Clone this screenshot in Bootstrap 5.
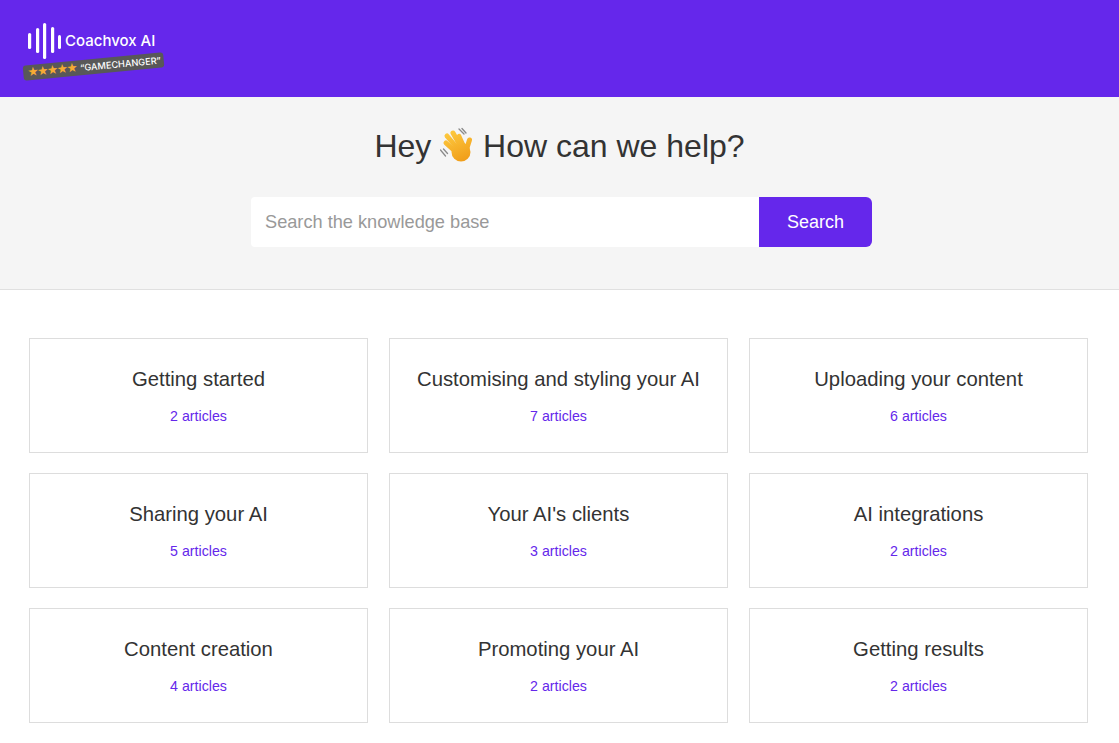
<!DOCTYPE html>
<html lang="en">
<head>
  <meta charset="UTF-8" />
  <meta name="viewport" content="width=device-width, initial-scale=1" />
  <title>Coachvox AI Help</title>
  <link href="https://cdn.jsdelivr.net/npm/bootstrap@5.3.2/dist/css/bootstrap.min.css" rel="stylesheet" />
  <script src="https://cdn.jsdelivr.net/npm/bootstrap@5.3.2/dist/js/bootstrap.bundle.min.js"></script>
  <style>
    body {
      font-family: "Liberation Sans", Arial, sans-serif;
      color: #333;
      background: #fff;
    }
    .top-bar {
      height: 97px;
      background: #6527eb;
      padding: 22px 0 0 27px;
    }
    .logo-wrap {
      width: 140px;
    }
    .logo-name {
      color: #fff;
      font-family: "Inter", sans-serif;
      font-size: 15px;
      font-weight: 500;
      line-height: 38px;
      margin-left: 4px;
      white-space: nowrap;
    }
    .logo-tag {
      position: absolute;
      left: -4px;
      top: 37px;
      width: 141px;
      height: 15px;
      background: #585858;
      border-radius: 3px;
      transform: rotate(-5.5deg);
      color: #fff;
      font-family: "Inter", sans-serif;
      font-size: 9.2px;
      font-weight: 500;
      line-height: 15px;
      padding-left: 4px;
      white-space: nowrap;
    }
    .logo-stars {
      color: #f6ab33;
      font-size: 11px;
      letter-spacing: -1.7px;
      margin-right: 4px;
    }
    .hero {
      height: 193px;
      background: #f5f5f5;
      border-bottom: 1px solid #e0e0e0;
      padding-top: 29px;
    }
    .hero-title {
      font-size: 32px;
      line-height: 40px;
      font-weight: 400;
      margin: 0 0 31px;
      color: #333;
    }
    .hero-title svg {
      vertical-align: -6px;
    }
    .search-box {
      width: 621px;
      margin-left: 251px;
    }
    .search-box .form-control {
      height: 50px;
      border: 0;
      border-radius: 4px 0 0 4px;
      font-size: 18.2px;
      padding: 0 14px;
      box-shadow: none;
    }
    .search-box .form-control::placeholder {
      color: #999;
    }
    .search-box .btn {
      width: 113px;
      height: 50px;
      border: 0;
      border-radius: 0 6px 6px 0;
      background: #6527eb;
      color: #fff;
      font-size: 18px;
    }
    .cat-area {
      padding: 48px 31px 0 29px;
    }
    .cat-area .row {
      --bs-gutter-x: 21px;
      --bs-gutter-y: 20px;
    }
    .cat-box {
      height: 115px;
      border: 1px solid #ddd;
      text-align: center;
      padding-top: 27px;
      text-decoration: none;
    }
    .cat-name {
      font-size: 20.3px;
      line-height: 26px;
      color: #333;
    }
    .cat-count {
      font-size: 14.2px;
      line-height: 20px;
      margin-top: 14px;
      color: #6527eb;
    }
  </style>
</head>
<body>
  <header class="top-bar">
    <div class="logo-wrap position-relative d-flex align-items-start">
      <svg width="34" height="38" viewBox="0 0 34 38" fill="#fff" aria-hidden="true">
        <rect x="1" y="11" width="3.2" height="16" rx="1.6" />
        <rect x="9" y="6" width="3.2" height="25" rx="1.6" />
        <rect x="16" y="1" width="3.2" height="36" rx="1.6" />
        <rect x="24" y="5" width="3.2" height="26" rx="1.6" />
        <rect x="31" y="13" width="3" height="14" rx="1.5" />
      </svg>
      <span class="logo-name">Coachvox AI</span>
      <div class="logo-tag"><span class="logo-stars">★★★★★</span>“GAMECHANGER”</div>
    </div>
  </header>

  <section class="hero text-center">
    <h1 class="hero-title">Hey
      <svg width="34" height="36" viewBox="4 3 34 36" aria-hidden="true">
        <defs>
          <linearGradient id="handFill" gradientUnits="userSpaceOnUse" x1="14" y1="8" x2="28" y2="38">
            <stop offset="0" stop-color="#fdc83e" />
            <stop offset="1" stop-color="#f09c18" />
          </linearGradient>
        </defs>
        <g fill="none" stroke="url(#handFill)" stroke-linecap="round">
          <path stroke-width="5" d="M20 28 10 19" />
          <path stroke-width="5" d="M22 25 11 12" />
          <path stroke-width="5" d="M25 23 17 9" />
          <path stroke-width="4.500" d="M28 23 23 12" />
          <path stroke-width="5" d="M29 30 33.500 16" />
        </g>
        <circle cx="25" cy="28" r="9.500" fill="url(#handFill)" />
        <path fill="none" stroke="#8a8a8a" stroke-width="1.300" stroke-linecap="round" d="M23 5l5 5M26 4.500l4 4.500M4.500 26l5 6M7.500 25l4 4.500" />
      </svg>
      How can we help?</h1>
    <form class="search-box input-group" onsubmit="return false">
      <input type="text" class="form-control" placeholder="Search the knowledge base" />
      <button class="btn" type="submit">Search</button>
    </form>
  </section>

  <main class="cat-area">
    <div class="row row-cols-3" id="catGrid"></div>
  </main>

  <script>
    const categories = [
      ["Getting started", 2],
      ["Customising and styling your AI", 7],
      ["Uploading your content", 6],
      ["Sharing your AI", 5],
      ["Your AI's clients", 3],
      ["AI integrations", 2],
      ["Content creation", 4],
      ["Promoting your AI", 2],
      ["Getting results", 2]
    ];
    const grid = document.getElementById("catGrid");
    categories.forEach(([name, count]) => {
      const col = document.createElement("div");
      col.className = "col";
      col.innerHTML = `
        <a class="cat-box d-block" href="#">
          <div class="cat-name">${name}</div>
          <div class="cat-count">${count} articles</div>
        </a>`;
      grid.appendChild(col);
    });
  </script>
</body>
</html>
